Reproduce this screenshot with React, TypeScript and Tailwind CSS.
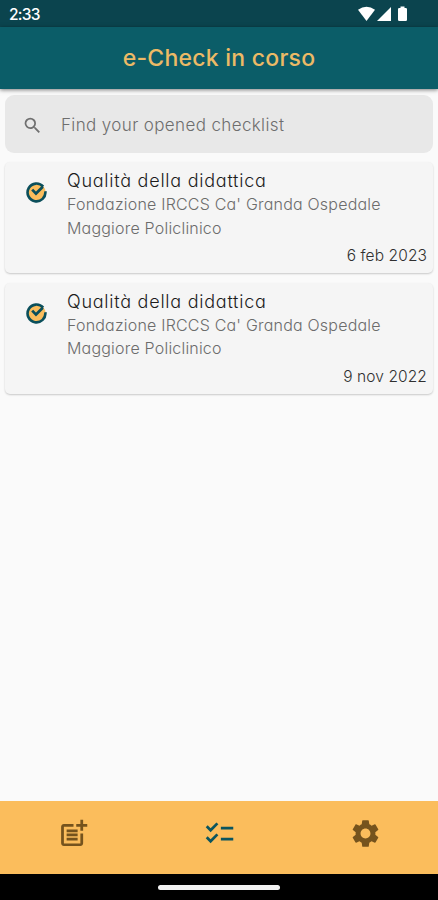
import { MdChecklist, MdPostAdd, MdSearch, MdSettings } from "react-icons/md";

type Checklist = {
  id: number;
  title: string;
  place: string[];
  date: string;
};

const checklists: Checklist[] = [
  {
    id: 1,
    title: "Qualità della didattica",
    place: ["Fondazione IRCCS Ca' Granda Ospedale", "Maggiore Policlinico"],
    date: "6 feb 2023",
  },
  {
    id: 2,
    title: "Qualità della didattica",
    place: ["Fondazione IRCCS Ca' Granda Ospedale", "Maggiore Policlinico"],
    date: "9 nov 2022",
  },
];

function StatusBar() {
  return (
    <div className="flex h-[27px] shrink-0 items-center justify-between bg-[#0b444e] pl-[9px] pr-[30px] text-white">
      <span className="pt-[2px] text-[15.5px] font-medium leading-[20px] tracking-[-0.7px]">2:33</span>
      <svg width="50" height="16" viewBox="0 0 50 16" fill="currentColor">
        <path d="M0 3.8Q8.5-2.4 17 3.8L8.5 15Z" />
        <path d="M33 1v14H19Z" />
        <path d="M42.5.5h4V2h1.3q1.2 0 1.2 1.2v10.6q0 1.2-1.2 1.2h-6.6q-1.2 0-1.2-1.2V3.2Q40 2 41.2 2h1.3Z" />
      </svg>
    </div>
  );
}

function CheckBadge() {
  return (
    <svg width="21" height="21" viewBox="0 0 21 21" fill="none">
      <circle cx="10.5" cy="10.5" r="9.2" fill="#fbbd5c" />
      <path
        d="M17.2 4.6A8.9 8.9 0 1 0 19.3 9.2"
        stroke="#0b4f5b"
        strokeWidth="2.6"
      />
      <path d="M6.2 7.6 10 11.6 16.8 4.8" stroke="#0b4f5b" strokeWidth="2.8" />
    </svg>
  );
}

function ChecklistCard({ item }: { item: Checklist }) {
  return (
    <li className="flex h-[111px] rounded-[5px] bg-[#f5f5f5] pl-[21px] pr-[6px] pt-[7px] shadow-[0_1px_2px_rgba(0,0,0,0.2)]">
      <div className="w-[41px] shrink-0 pt-[13px]">
        <CheckBadge />
      </div>
      <div className="min-w-0 flex-1">
        <h2 className="whitespace-nowrap text-[18px] font-light leading-[24px] tracking-[0.75px] text-[#1c1c1c]">
          {item.title}
        </h2>
        {item.place.map((line) => (
          <p
            key={line}
            className="whitespace-nowrap text-[16px] font-light leading-[23.5px] tracking-[0.2px] text-[#6c6c6c]"
          >
            {line}
          </p>
        ))}
        <p className="mt-[4px] text-right text-[15.5px] font-light leading-[24px] tracking-[0.1px] text-[#303030]">
          {item.date}
        </p>
      </div>
    </li>
  );
}

export default function App() {
  return (
    <div className="flex h-[900px] w-full flex-col overflow-hidden bg-[#fafafa] font-['Inter',sans-serif] [font-feature-settings:'cv11']">
      <StatusBar />

      <header className="z-10 flex h-[62px] shrink-0 items-center justify-center bg-[#0b5d68] shadow-[0_1px_4px_rgba(0,0,0,0.5)]">
        <h1 className="whitespace-nowrap text-[23px] font-medium leading-[30px] tracking-[0.25px] text-[#ecba66]">
          e-Check in corso
        </h1>
      </header>

      <main className="flex-1 px-[5px] pt-[6px]">
        {/* Search */}
        <div className="flex h-[58px] items-center rounded-[9px] bg-[#e8e8e8] pl-[17px]">
          <MdSearch size={21} className="mt-[2px] shrink-0 text-[#707070]" />
          <span className="ml-[18px] mt-px whitespace-nowrap text-[17px] font-light leading-[24px] tracking-[0.37px] text-[#6e6e6e]">
            Find your opened checklist
          </span>
        </div>

        <ul className="mt-[9px] flex flex-col gap-[9.5px]">
          {checklists.map((item) => (
            <ChecklistCard key={item.id} item={item} />
          ))}
        </ul>
      </main>

      {/* Bottom navigation */}
      <nav className="grid h-[73px] shrink-0 grid-cols-3 bg-[#fbbd5c] pt-[16px] text-[#75531d]">
        <MdPostAdd size={33} className="justify-self-center" />
        <MdChecklist size={33} className="justify-self-center text-[#0b555e]" />
        <MdSettings size={33} className="justify-self-center" />
      </nav>

      <div className="flex h-[26px] shrink-0 items-center justify-center bg-black">
        <div className="h-[5px] w-[122px] rounded-full bg-[#f2f2f2]" />
      </div>
    </div>
  );
}
